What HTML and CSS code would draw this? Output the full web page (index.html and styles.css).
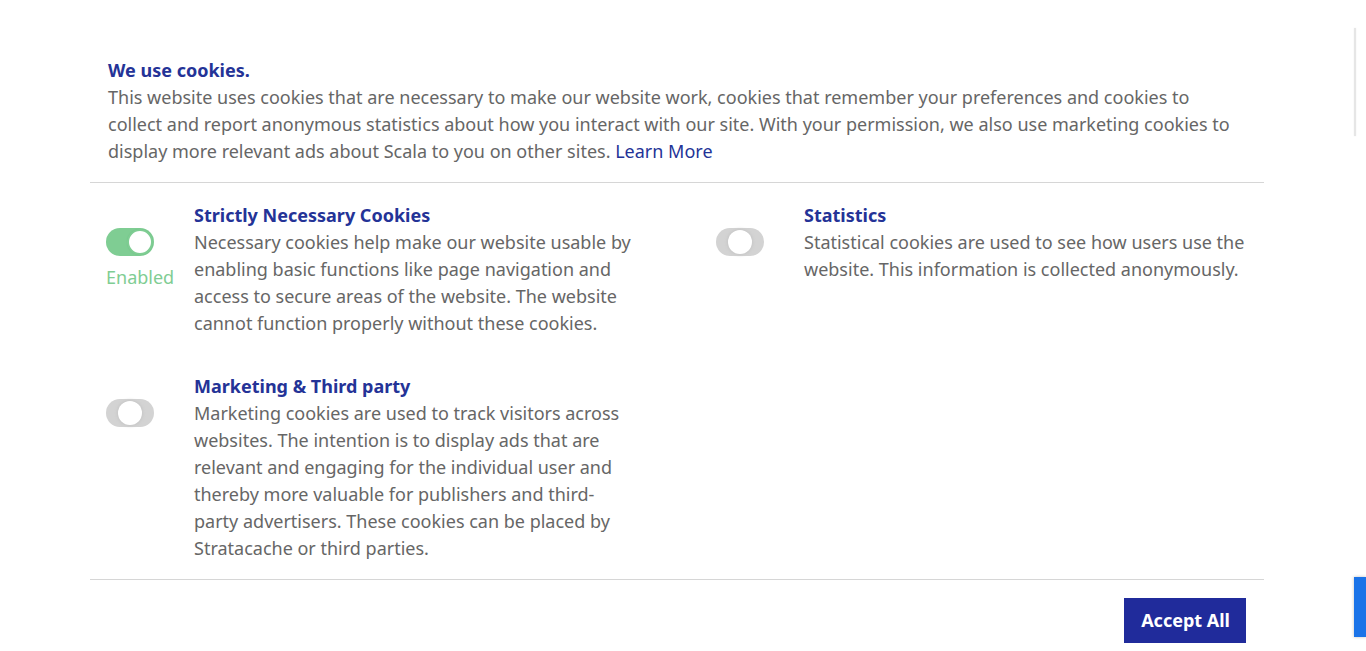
FILE: index.html
```html
<!DOCTYPE html>
<html lang="en">
<head>
<meta charset="utf-8">
<title>Cookie preferences</title>
<link rel="stylesheet" href="styles.css">
</head>
<body>
<div class="modal">
  <div class="intro">
    <h2 class="title">We use cookies.</h2>
    <p class="text">This website uses cookies that are necessary to make our website work, cookies that remember your preferences and cookies to collect and report anonymous statistics about how you interact with our site. With your permission, we also use marketing cookies to display more relevant ads about Scala to you on other sites. <a class="link" href="#">Learn More</a></p>
  </div>
  <div class="options">
    <div class="option">
      <div class="control">
        <span class="toggle on"><span class="knob"></span></span>
        <span class="state">Enabled</span>
      </div>
      <div class="body">
        <h3 class="heading">Strictly Necessary Cookies</h3>
        <p class="text">Necessary cookies help make our website usable by enabling basic functions like page navigation and access to secure areas of the website. The website cannot function properly without these cookies.</p>
      </div>
    </div>
    <div class="option">
      <div class="control">
        <span class="toggle off"><span class="knob"></span></span>
      </div>
      <div class="body">
        <h3 class="heading">Statistics</h3>
        <p class="text">Statistical cookies are used to see how users use the website. This information is collected anonymously.</p>
      </div>
    </div>
    <div class="option">
      <div class="control">
        <span class="toggle off"><span class="knob"></span></span>
      </div>
      <div class="body">
        <h3 class="heading">Marketing &amp; Third party</h3>
        <p class="text">Marketing cookies are used to track visitors across websites. The intention is to display ads that are relevant and engaging for the individual user and thereby more valuable for publishers and third-party advertisers. These cookies can be placed by Stratacache or third parties.</p>
      </div>
    </div>
  </div>
  <div class="actions">
    <button class="accept" type="button">Accept All</button>
  </div>
</div>
<div class="edge-line"></div>
<div class="edge-tab"></div>
</body>
</html>
```

FILE: styles.css
```css
* { box-sizing: border-box; }
html, body {
  margin: 0;
  padding: 0;
  background: #ffffff;
  height: 100%;
  overflow: hidden;
}
body {
  font-family: "Noto Sans", "Open Sans", "Liberation Sans", sans-serif;
  font-size: 18px;
  line-height: 27px;
  color: #666666;
  position: relative;
}
.modal {
  margin-left: 90px;
  width: 1174px;
  padding-top: 57px;
}
.intro {
  padding: 0 18px 17px 18px;
  border-bottom: 1px solid #d6d6d6;
}
.title {
  margin: 0;
  font-size: 18px;
  line-height: 27px;
  font-weight: 700;
  color: #243397;
}
.text {
  margin: 0;
}
.link {
  color: #243397;
  text-decoration: none;
}
.options {
  display: grid;
  grid-template-columns: 532px 532px;
  column-gap: 78px;
  row-gap: 36px;
  padding: 19px 16px 17px 16px;
  border-bottom: 1px solid #d6d6d6;
}
.option {
  display: flex;
}
.control {
  width: 88px;
  flex: none;
  display: flex;
  flex-direction: column;
  align-items: flex-start;
  padding-top: 26px;
}
.body {
  width: 444px;
}
.heading {
  margin: 0;
  font-size: 18px;
  line-height: 27px;
  font-weight: 700;
  color: #243397;
}
.toggle {
  position: relative;
  display: block;
  width: 48px;
  height: 28px;
  border-radius: 14px;
}
.toggle.on { background: #7fcd93; }
.toggle.off { background: #d3d3d3; }
.knob {
  position: absolute;
  top: 1px;
  width: 26px;
  height: 26px;
  border-radius: 50%;
  background: #ffffff;
}
.toggle.on .knob {
  left: 21px;
  border: 2px solid #7fcd93;
  box-shadow: 0 0 1px #6cbf82;
}
.toggle.off .knob {
  left: 12px;
  top: 2px;
  width: 24px;
  height: 24px;
  box-shadow: 0 0 3px 1px #c6c6c6;
}
.state {
  margin-top: 8px;
  color: #7fcd93;
}
.actions {
  display: flex;
  justify-content: flex-end;
  padding: 18px 18px 0 18px;
}
.accept {
  font-family: "Noto Sans", "Open Sans", "Liberation Sans", sans-serif;
  font-size: 18px;
  line-height: 27px;
  font-weight: 700;
  color: #ffffff;
  background: #202b9b;
  border: none;
  border-radius: 0;
  padding: 9px 16px 9px 17px;
  height: 45px;
}
.edge-line {
  position: absolute;
  left: 1354px;
  top: 28px;
  width: 2px;
  height: 108px;
  background: #e6e6e6;
  box-shadow: 0 0 2px #eeeeee;
}
.edge-tab {
  position: absolute;
  left: 1354px;
  top: 577px;
  width: 12px;
  height: 60px;
  background: #1a73e8;
  box-shadow: 0 0 3px rgba(0,0,0,0.25);
}
```
